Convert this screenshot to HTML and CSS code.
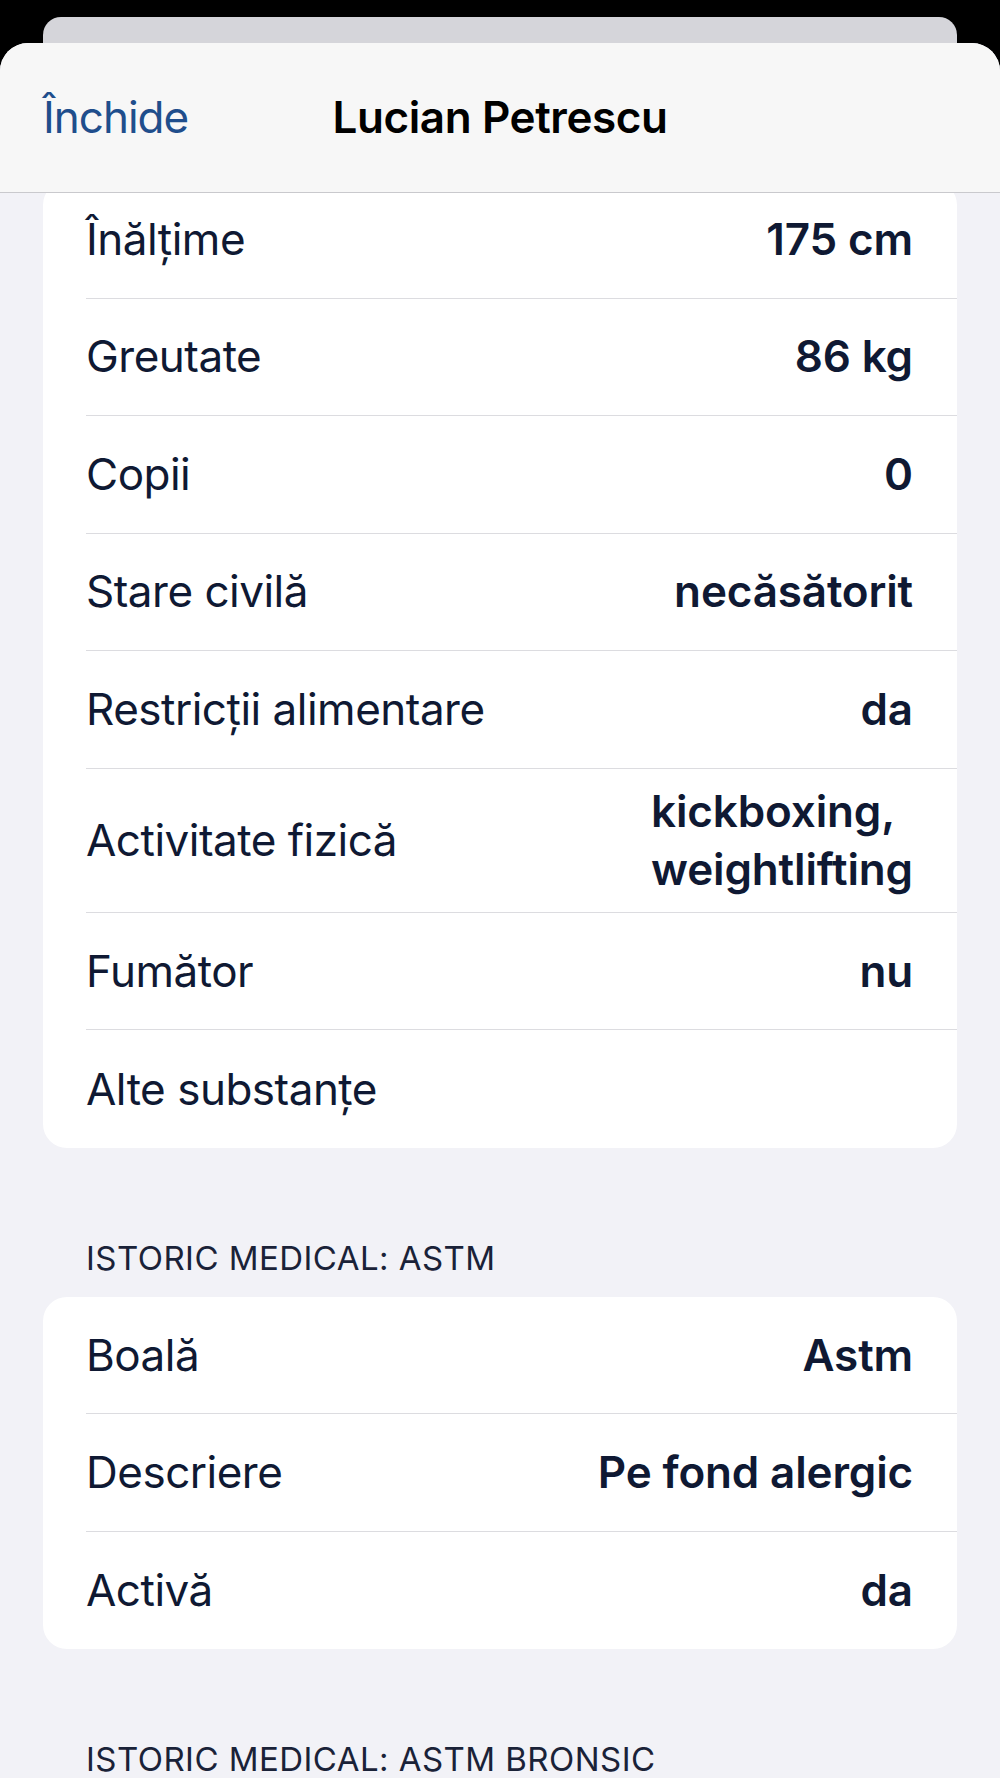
FILE: index.html
```html
<!DOCTYPE html>
<html lang="ro">
<head>
<meta charset="utf-8">
<title>Lucian Petrescu</title>
<link rel="stylesheet" href="styles.css">
</head>
<body>
<div class="screen">
  <div class="backcard"></div>
  <div class="sheet">
    <header class="navbar">
      <a class="nav-close">Închide</a>
      <h1 class="nav-title">Lucian Petrescu</h1>
      <span class="nav-spacer"></span>
    </header>
    <main class="content">
      <section class="card card-first">
        <div class="row"><span class="label">Înălțime</span><span class="value">175 cm</span></div>
        <div class="row"><span class="label">Greutate</span><span class="value">86 kg</span></div>
        <div class="row"><span class="label">Copii</span><span class="value">0</span></div>
        <div class="row"><span class="label">Stare civilă</span><span class="value">necăsătorit</span></div>
        <div class="row"><span class="label">Restricții alimentare</span><span class="value">da</span></div>
        <div class="row"><span class="label">Activitate fizică</span><span class="value value-multi">kickboxing,<br>weightlifting</span></div>
        <div class="row"><span class="label">Fumător</span><span class="value">nu</span></div>
        <div class="row"><span class="label">Alte substanțe</span><span class="value"></span></div>
      </section>

      <h2 class="section-title">ISTORIC MEDICAL: ASTM</h2>
      <section class="card">
        <div class="row"><span class="label">Boală</span><span class="value">Astm</span></div>
        <div class="row"><span class="label">Descriere</span><span class="value">Pe fond alergic</span></div>
        <div class="row"><span class="label">Activă</span><span class="value">da</span></div>
      </section>

      <h2 class="section-title">ISTORIC MEDICAL: ASTM BRONSIC</h2>
    </main>
  </div>
</div>
</body>
</html>
```

FILE: styles.css
```css
* {
  box-sizing: border-box;
}

html, body {
  margin: 0;
  padding: 0;
  background: #000;
}

body {
  width: 1000px;
  height: 1778px;
  overflow: hidden;
  font-family: Inter, "Liberation Sans", Arial, sans-serif;
  color: #0f1933;
}

.screen {
  height: 1778px;
  display: flex;
  flex-direction: column;
  padding-top: 17px;
}

.backcard {
  height: 26px;
  margin: 0 43px;
  background: #d5d5da;
  border-radius: 18px 18px 0 0;
  flex: none;
}

.sheet {
  flex: 1;
  background: #f2f2f7;
  border-radius: 28px 28px 0 0;
  overflow: hidden;
  display: flex;
  flex-direction: column;
}

.navbar {
  flex: none;
  height: 150px;
  background: #f7f7f7;
  border-bottom: 1.5px solid #c9c9cd;
  display: grid;
  grid-template-columns: 1fr auto 1fr;
  align-items: start;
  padding: 0 43px;
  position: relative;
  z-index: 2;
}

.nav-close {
  font-size: 44px;
  line-height: 58px;
  padding-top: 45px;
  color: #1f4e8c;
  letter-spacing: -1px;
  justify-self: start;
}

.nav-title {
  margin: 0;
  font-size: 44px;
  line-height: 58px;
  padding-top: 45px;
  font-weight: 600;
  color: #000;
  letter-spacing: -0.4px;
}

.content {
  flex: 1;
  padding: 0 43px;
  overflow: hidden;
}

.card {
  background: #fff;
  border-radius: 24px;
  overflow: hidden;
}

.card-first {
  margin-top: -12px;
}

.row {
  display: flex;
  justify-content: space-between;
  align-items: center;
  min-height: 117.5px;
  margin-left: 43px;
  padding: 13px 44px 13px 0;
  border-bottom: 1.5px solid #dcdce0;
  font-size: 44px;
  line-height: 58.7px;
}

.row:last-child {
  border-bottom: none;
}

.label {
  font-weight: 400;
  letter-spacing: -0.5px;
}

.value {
  font-weight: 600;
  text-align: right;
  letter-spacing: -0.15px;
}

.value-multi {
  text-align: left;
}

.section-title {
  margin: 90px 0 19px;
  padding-left: 43px;
  font-size: 33px;
  line-height: 40px;
  font-weight: 400;
  color: #1a2238;
  letter-spacing: 0.45px;
}
```
